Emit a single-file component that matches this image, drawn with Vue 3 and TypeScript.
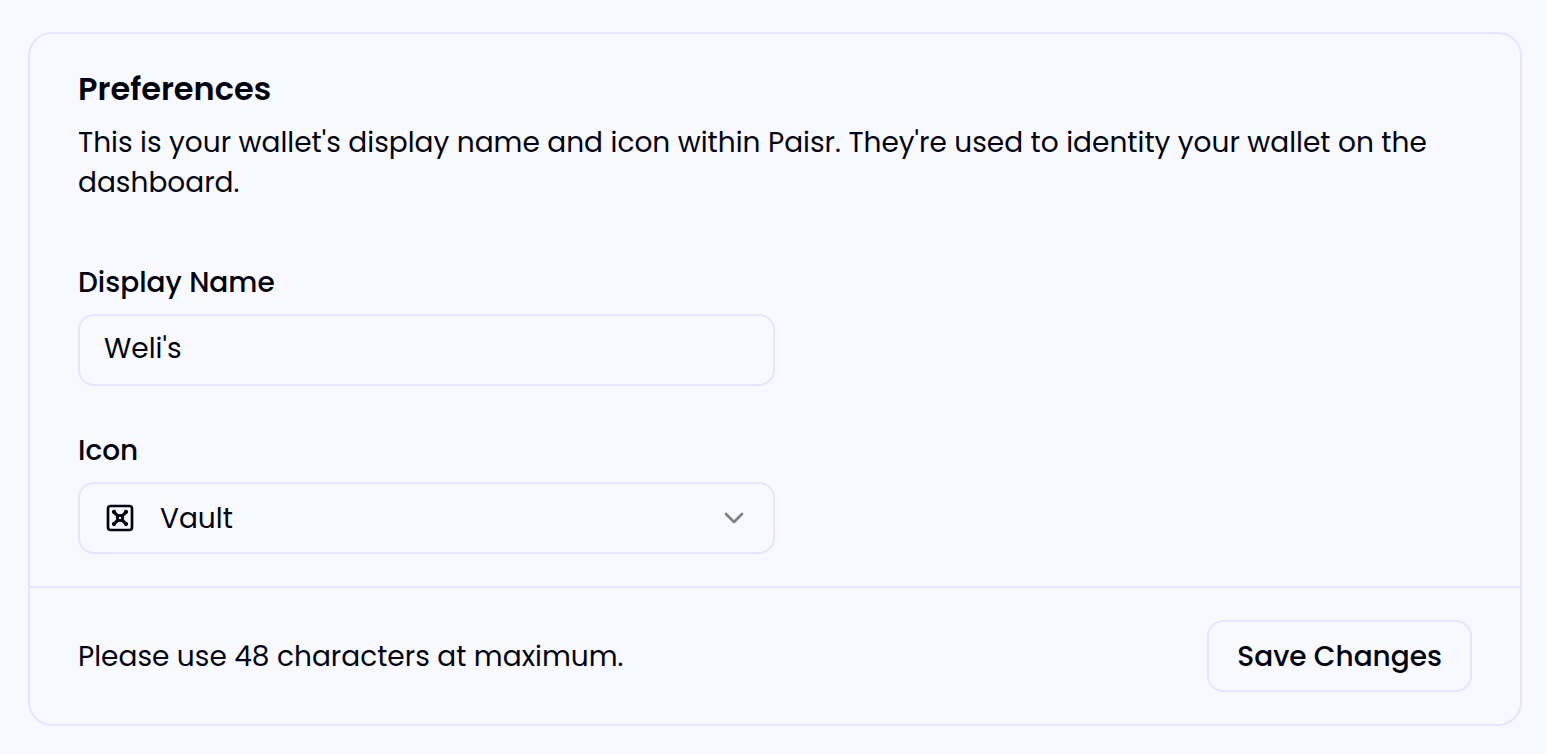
<script setup lang="ts">
import { ref } from 'vue'

const displayName = ref("Weli's")
const icon = ref('Vault')
const icons: string[] = ['Vault']
</script>

<template>
  <main class="page">
    <form class="card" @submit.prevent>
      <section class="body">
        <header>
          <h1>Preferences</h1>
          <p>This is your wallet's display name and icon within Paisr. They're used to identity your wallet on the dashboard.</p>
        </header>
        <div class="field name-field">
          <label for="display-name">Display Name</label>
          <input id="display-name" v-model="displayName" class="control" type="text" maxlength="48" />
        </div>
        <div class="field icon-field">
          <label for="wallet-icon">Icon</label>
          <div class="select-wrap">
            <select id="wallet-icon" v-model="icon" class="control">
              <option v-for="name in icons" :key="name" :value="name">{{ name }}</option>
            </select>
            <svg class="vault" viewBox="0 0 24 24" aria-hidden="true">
              <rect x="3" y="3" width="18" height="18" rx="2" />
              <circle cx="12" cy="12" r="2" />
              <path class="spokes" d="m7.9 7.9 2.7 2.7M13.4 10.6l2.7-2.7M7.9 16.1l2.7-2.7M13.4 13.4l2.7 2.7" />
              <g class="dots">
                <circle cx="7.5" cy="7.5" r=".6" />
                <circle cx="16.5" cy="7.5" r=".6" />
                <circle cx="7.5" cy="16.5" r=".6" />
                <circle cx="16.5" cy="16.5" r=".6" />
              </g>
            </svg>
            <svg class="chevron" viewBox="0 0 24 24" aria-hidden="true"><path d="m6 9 6 6 6-6" /></svg>
          </div>
        </div>
      </section>
      <footer class="footer">
        <p>Please use 48 characters at maximum.</p>
        <button type="submit">Save Changes</button>
      </footer>
    </form>
  </main>
</template>

<style>
body {
  background: #f8f9ff;
}
</style>

<style scoped>
.page {
  padding: 32px 24px 28px 28px;
  color: #020410;
  font-family: Poppins, Inter, "Open Sans", sans-serif;
  font-size: 28px;
  line-height: 40px;
}
.card {
  border: 2px solid #e6e4fe;
  border-radius: 24px;
}
.body {
  padding: 35px 48px 32px;
}
h1 {
  margin: 0 0 14px;
  font-size: 32px;
  font-weight: 600;
  line-height: 40px;
}
p {
  margin: 0;
}
.field {
  width: 50%;
}
.name-field {
  margin-top: 60px;
}
.icon-field {
  margin-top: 45px;
}
.field label {
  display: block;
  margin-bottom: 11px;
  font-weight: 500;
}
.control {
  display: block;
  box-sizing: border-box;
  width: 100%;
  height: 72px;
  padding: 0 24px 2px;
  border: 2px solid #e6e4fe;
  border-radius: 16px;
  background: transparent;
  color: inherit;
  font: inherit;
  outline: none;
  appearance: none;
}
.select-wrap {
  position: relative;
}
select.control {
  padding: 2px 64px 0 80px;
}
svg {
  position: absolute;
  top: 20px;
  width: 32px;
  height: 32px;
  fill: none;
  stroke: currentColor;
  stroke-width: 2;
  stroke-linecap: round;
  stroke-linejoin: round;
  pointer-events: none;
}
.vault {
  left: 26px;
}
.spokes {
  stroke-width: 2.4;
}
.dots {
  fill: currentColor;
}
.chevron {
  right: 25px;
  color: #808080;
}
.footer {
  display: flex;
  align-items: center;
  justify-content: space-between;
  padding: 32px 48px;
  border-top: 2px solid #e6e4fe;
}
.footer p {
  padding-top: 2px;
}
button {
  height: 72px;
  padding: 2px 28px 0;
  border: 2px solid #e6e4fe;
  border-radius: 16px;
  background: transparent;
  color: inherit;
  font: inherit;
  font-weight: 500;
}
</style>
